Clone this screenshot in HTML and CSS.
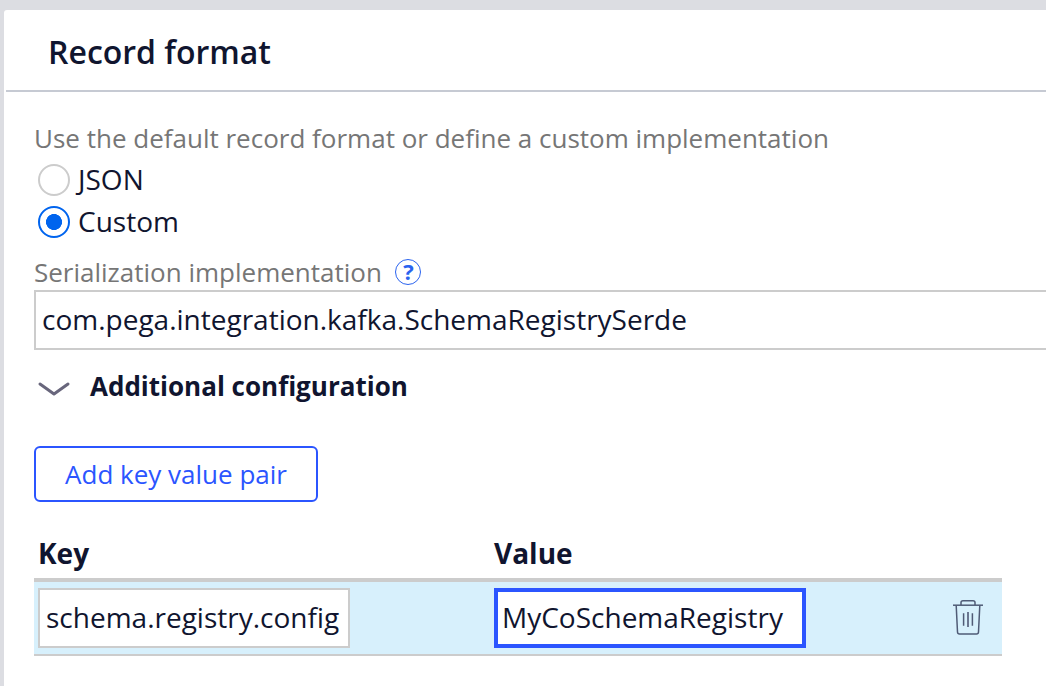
FILE: index.html
```html
<!DOCTYPE html>
<html lang="en">
<head>
<meta charset="utf-8">
<title>Record format</title>
<link rel="stylesheet" href="styles.css">
</head>
<body>
<main class="panel">
  <header class="panel-header"><h1 class="title">Record format</h1></header>
  <div class="panel-body">
    <div class="label intro">Use the default record format or define a custom implementation</div>
    <div class="radio"><span class="dot"></span><span class="radio-text json">JSON</span></div>
    <div class="radio"><span class="dot checked"></span><span class="radio-text">Custom</span></div>
    <div class="label serial"><span class="serial-text">Serialization implementation</span><span class="help">?</span></div>
    <div class="field wide"><span class="serde">com.pega.integration.kafka.SchemaRegistrySerde</span></div>
    <div class="section">
      <svg class="chevron" width="32" height="18" viewBox="0 0 32 18"><path d="M2 3 L16 13 L30 3" fill="none" stroke="#68667c" stroke-width="3" stroke-linecap="round" stroke-linejoin="round"/></svg>
      <h2 class="section-title">Additional configuration</h2>
    </div>
    <button class="add" type="button"><span class="add-text">Add key value pair</span></button>
    <div class="table">
      <div class="row head"><span class="key-head">Key</span><span class="value-head">Value</span></div>
      <div class="row data">
        <div class="field cell"><span class="key-text">schema.registry.config</span></div>
        <div class="field cell focused"><span class="value-text">MyCoSchemaRegistry</span></div>
        <svg class="trash" width="32" height="38" viewBox="0 0 32 38" fill="none" stroke="#4f5b76" stroke-width="1.5" stroke-linejoin="round">
          <path d="M1 7.2H31"/>
          <path d="M9 7V4.5Q9 2.7 11 2.7H21Q23 2.7 23 4.5V7"/>
          <path d="M4.2 7.5L5.5 34Q5.6 35.9 7.5 35.9H24.5Q26.4 35.9 26.5 34L27.8 7.5"/>
          <path d="M11.6 15.2V27.8M20.4 15.2V27.8"/>
          <path d="M16 14V29" stroke-width="2" stroke="#6a7690"/>
        </svg>
      </div>
    </div>
  </div>
</main>
</body>
</html>
```
FILE: styles.css
```css
* { box-sizing: border-box; }
body {
  margin: 0;
  height: 686px;
  overflow: hidden;
  padding: 10px 0 0 4px;
  background: #dcdde2;
  color: #10152f;
  font-family: "Open Sans", sans-serif;
  font-size: 28px;
  white-space: nowrap;
}
.panel { height: 676px; background: #fff; border-top-left-radius: 3px; }
.panel-header {
  height: 82px;
  margin-left: 2px;
  padding: 20px 0 0 42px;
  border-bottom: 2px solid #c6cad3;
}
.title { margin: 0; font-size: 32px; line-height: 44px; font-weight: 600; }
.panel-body { padding: 26px 0 0 30px; }
.label { color: #767676; font-size: 26px; }
.intro { height: 41px; line-height: 40px; }
.radio { display: flex; align-items: center; gap: 8px; height: 42px; padding-left: 4px; }
.radio-text { line-height: 40px; margin-top: -2px; }
.dot { width: 32px; height: 32px; border: 2px solid #ccc; border-radius: 50%; }
.checked {
  border-color: #0064ee;
  background: radial-gradient(circle, #0064ee 7.7px, transparent 8.3px);
}
.serial { display: flex; align-items: center; gap: 13.5px; height: 47px; padding-top: 10px; }
.serial-text { line-height: 36px; }
.help {
  width: 26px;
  height: 26px;
  margin-top: 1px;
  border: 1.5px solid #2a63ef;
  border-radius: 50%;
  color: #2a63ef;
  font-size: 22px;
  font-weight: 700;
  line-height: 23px;
  text-align: center;
}
.field {
  display: flex;
  align-items: center;
  height: 60px;
  padding: 0 0 2px 6px;
  border: 2px solid #ccc;
  background: #fff;
}
.wide { border-right: 0; }
.section { display: flex; align-items: center; gap: 20px; height: 72px; padding-left: 4px; }
.chevron { margin-top: 8px; }
.section-title { margin: 0; font-size: 26px; font-weight: 700; line-height: 36px; }
.add {
  display: flex;
  align-items: center;
  justify-content: center;
  width: 284px;
  height: 56px;
  margin: 24px 0 0;
  padding: 0;
  border: 2px solid #2b55ff;
  border-radius: 6px;
  background: #fff;
  color: #2b55ff;
  font: 26px/36px "Open Sans", sans-serif;
}
.table { width: 968px; margin-top: 30px; }
.row { display: grid; grid-template-columns: 312px 312px 1fr; column-gap: 144px; padding-left: 4px; }
.head { height: 46px; font-weight: 700; line-height: 42px; }
.data {
  grid-template-columns: 312px 312px 32px;
  align-items: center;
  height: 78px;
  background: #d7f0fc;
  border-top: 4px solid #ccc;
  border-bottom: 2px solid #ccc;
}
.focused { border: 4px solid #2b55ff; padding-left: 4px; }
.trash { margin: 0 0 2px 2px; }
```
